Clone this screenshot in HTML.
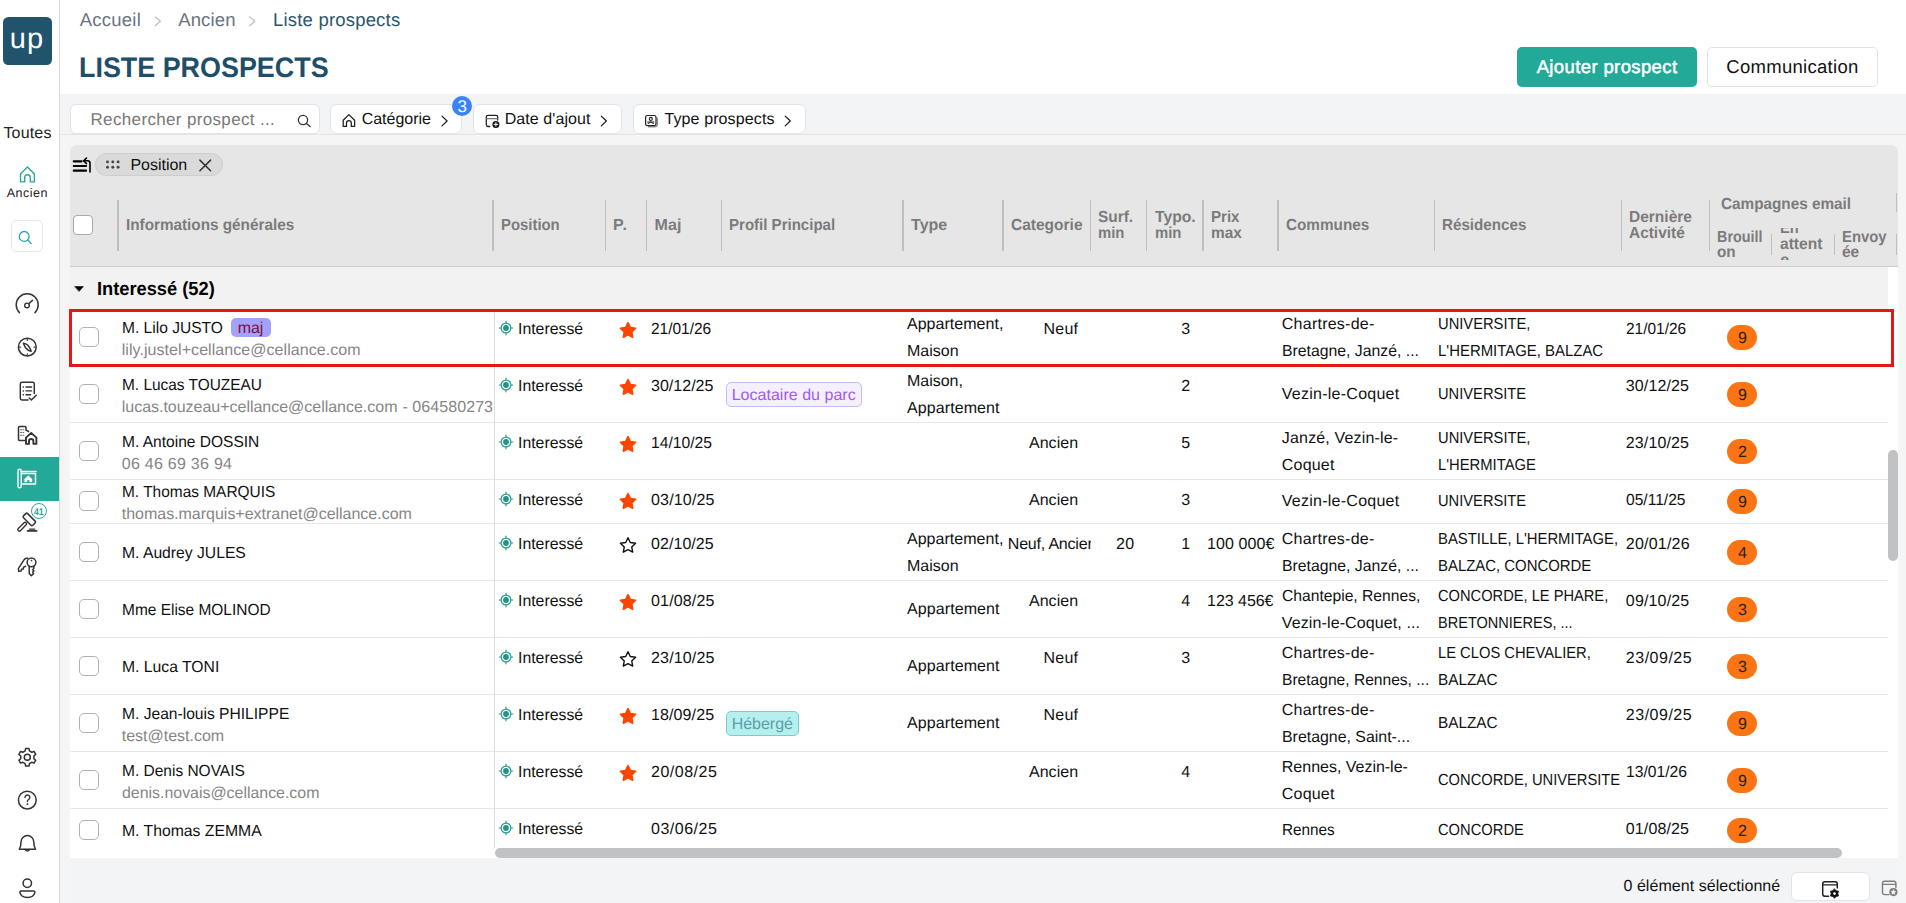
<!DOCTYPE html>
<html lang="fr"><head><meta charset="utf-8"><title>Liste prospects</title>
<style>
*{box-sizing:border-box;margin:0;padding:0}
html,body{width:1906px;height:903px;overflow:hidden}
body{position:relative;background:#f5f5f5;font-family:"Liberation Sans",sans-serif;color:#111}
.b{position:absolute}
.t{position:absolute;white-space:pre;line-height:20px;height:20px;text-rendering:geometricPrecision}
svg{position:absolute;overflow:visible}
.ck{position:absolute;width:20px;height:20px;border:1.7px solid #b0b1b8;border-radius:5px;background:#fff}
.pill{position:absolute;width:30px;height:25px;border-radius:13px;background:#fc7414}
.sep{position:absolute;background:#bfbfbf}

</style></head>
<body>
<div class="b" style="left:0px;top:0px;width:59px;height:903px;background:#fff;"></div>
<div class="b" style="left:59px;top:0px;width:1px;height:903px;background:#dadada;"></div>
<div class="b" style="left:2.8px;top:16.8px;width:48.9px;height:48.5px;background:#21536c;border-radius:5.5px;"></div>
<div class="b" style="left:11px;top:220px;width:32px;height:32px;background:#fff;border:1px solid #e5e7eb;border-radius:5px;"></div>
<div class="b" style="left:0px;top:457px;width:59px;height:44px;background:#22a998;"></div>
<div class="b" style="left:60px;top:0px;width:1846px;height:94px;background:#fff;"></div>
<div class="b" style="left:1517px;top:47px;width:180px;height:40px;background:#22a998;border-radius:5px;"></div>
<div class="b" style="left:1707px;top:47px;width:171px;height:40px;background:#fff;border:1px solid #e2e2e2;border-radius:5px;"></div>
<div class="b" style="left:60px;top:94px;width:1846px;height:40px;background:#f3f4f6;"></div>
<div class="b" style="left:70px;top:858px;width:1828px;height:45px;background:#f3f4f6;"></div>
<div class="b" style="left:60px;top:134px;width:1846px;height:1px;background:#e2e4e8;"></div>
<div class="b" style="left:70px;top:104px;width:250px;height:30px;background:#fff;border:1px solid #e1e3e8;border-radius:6px;"></div>
<div class="b" style="left:330.4px;top:104px;width:132px;height:30px;background:#fff;border:1px solid #e1e3e8;border-radius:6px;"></div>
<div class="b" style="left:473.4px;top:104px;width:149px;height:30px;background:#fff;border:1px solid #e1e3e8;border-radius:6px;"></div>
<div class="b" style="left:633.4px;top:104px;width:173px;height:30px;background:#fff;border:1px solid #e1e3e8;border-radius:6px;"></div>
<div class="b" style="left:452px;top:96px;width:20px;height:20px;background:#3b82f6;border-radius:10px;"></div>
<div class="b" style="left:70px;top:145px;width:1828px;height:122px;background:#e6e6e6;border-radius:7px 7px 0 0;"></div>
<div class="b" style="left:70px;top:266px;width:1828px;height:1px;background:#cbcbcb;"></div>
<div class="b" style="left:70px;top:267px;width:1828px;height:591px;background:#fff;"></div>
<div class="b" style="left:70px;top:267px;width:1818px;height:42px;background:#f2f2f2;"></div>
<div class="b" style="left:95px;top:153px;width:128px;height:23px;background:#dadada;border:1px solid #cdcdcd;border-radius:12px;"></div>
<div class="ck" style="left:72.5px;top:215px;border-color:#a9a9a9;border-radius:4px"></div>
<div class="sep" style="left:117.2px;top:200px;width:2px;height:51px"></div>
<div class="sep" style="left:492.2px;top:200px;width:2px;height:51px"></div>
<div class="sep" style="left:604.9px;top:200px;width:1px;height:51px"></div>
<div class="sep" style="left:646.0px;top:200px;width:1px;height:51px"></div>
<div class="sep" style="left:721.1px;top:200px;width:1px;height:51px"></div>
<div class="sep" style="left:902.2px;top:200px;width:2px;height:51px"></div>
<div class="sep" style="left:1002.3px;top:200px;width:2px;height:51px"></div>
<div class="sep" style="left:1090.2px;top:200px;width:1px;height:51px"></div>
<div class="sep" style="left:1146.2px;top:200px;width:1px;height:51px"></div>
<div class="sep" style="left:1202.3px;top:200px;width:2px;height:51px"></div>
<div class="sep" style="left:1277.2px;top:200px;width:2px;height:51px"></div>
<div class="sep" style="left:1434.0px;top:200px;width:1px;height:51px"></div>
<div class="sep" style="left:1621.0px;top:200px;width:1px;height:51px"></div>
<div class="sep" style="left:1708.8px;top:200px;width:1px;height:51px"></div>
<div class="sep" style="left:1771.0px;top:234px;width:1px;height:21px"></div>
<div class="sep" style="left:1833.8px;top:234px;width:1px;height:21px"></div>
<div class="sep" style="left:1896.3px;top:234px;width:1px;height:21px"></div>
<div class="sep" style="left:1896.3px;top:193px;width:1px;height:19px"></div>
<div class="b" style="left:70px;top:365px;width:1818px;height:1px;background:#e7e7e7;"></div>
<div class="ck" style="left:79px;top:327.0px"></div>
<div class="pill" style="left:1727px;top:325px"></div>
<div class="b" style="left:70px;top:422px;width:1818px;height:1px;background:#e7e7e7;"></div>
<div class="ck" style="left:79px;top:384.0px"></div>
<div class="pill" style="left:1727px;top:382px"></div>
<div class="b" style="left:70px;top:479px;width:1818px;height:1px;background:#e7e7e7;"></div>
<div class="ck" style="left:79px;top:441.0px"></div>
<div class="pill" style="left:1727px;top:439px"></div>
<div class="b" style="left:70px;top:523px;width:1818px;height:1px;background:#e7e7e7;"></div>
<div class="ck" style="left:79px;top:491.0px"></div>
<div class="pill" style="left:1727px;top:489px"></div>
<div class="b" style="left:70px;top:580px;width:1818px;height:1px;background:#e7e7e7;"></div>
<div class="ck" style="left:79px;top:542.0px"></div>
<div class="pill" style="left:1727px;top:540px"></div>
<div class="b" style="left:70px;top:637px;width:1818px;height:1px;background:#e7e7e7;"></div>
<div class="ck" style="left:79px;top:599.0px"></div>
<div class="pill" style="left:1727px;top:597px"></div>
<div class="b" style="left:70px;top:694px;width:1818px;height:1px;background:#e7e7e7;"></div>
<div class="ck" style="left:79px;top:656.0px"></div>
<div class="pill" style="left:1727px;top:654px"></div>
<div class="b" style="left:70px;top:751px;width:1818px;height:1px;background:#e7e7e7;"></div>
<div class="ck" style="left:79px;top:713.0px"></div>
<div class="pill" style="left:1727px;top:711px"></div>
<div class="b" style="left:70px;top:808px;width:1818px;height:1px;background:#e7e7e7;"></div>
<div class="ck" style="left:79px;top:770.0px"></div>
<div class="pill" style="left:1727px;top:768px"></div>
<div class="ck" style="left:79px;top:820.0px"></div>
<div class="pill" style="left:1727px;top:818px"></div>
<div class="b" style="left:231px;top:318px;width:40px;height:19px;background:#a5a0fb;border-radius:5px;"></div>
<div class="b" style="left:726px;top:382px;width:136px;height:25px;background:#f4f0ff;border:1px solid #c9b8fb;border-radius:5px;"></div>
<div class="b" style="left:726px;top:711px;width:73px;height:25px;background:#b5f0ef;border:1px solid #74cfd2;border-radius:5px;"></div>
<div class="b" style="left:494px;top:309px;width:1px;height:539px;background:#dedede;"></div>
<div class="b" style="left:495px;top:848px;width:1347px;height:10px;background:#c1c2c4;border-radius:5px;"></div>
<div class="b" style="left:1888px;top:450px;width:10px;height:111px;background:#c1c2c4;border-radius:5px;"></div>
<div class="b" style="left:1791px;top:871.5px;width:78.5px;height:29px;background:#fff;border:1px solid #e1e3e8;border-radius:6px;"></div>
<div class="b" style="left:31.1px;top:503.4px;width:16px;height:16px;background:#fff;border:1.2px solid #2aa79b;border-radius:50%;"></div>
<span class="t" id="s0" style="top:29px;font-size:29px;color:#fff;letter-spacing:0.982px;left:9.79px;">up</span>
<span class="t" id="s1" style="top:124px;font-size:16px;color:#222;letter-spacing:0.163px;left:3.44px;">Toutes</span>
<span class="t" id="s2" style="top:183px;font-size:12.5px;color:#222;letter-spacing:0.473px;left:6.76px;">Ancien</span>
<span class="t" id="s3" style="top:10px;font-size:18.5px;color:#6b7280;letter-spacing:0.236px;left:79.75px;">Accueil</span>
<span class="t" id="s4" style="top:10px;font-size:18.5px;color:#6b7280;letter-spacing:0.153px;left:178.15px;">Ancien</span>
<span class="t" id="s5" style="top:10px;font-size:18.5px;color:#2b566e;letter-spacing:0.191px;left:273.05px;">Liste prospects</span>
<span class="t" id="s6" style="top:57px;font-size:28.2px;font-weight:700;color:#1f4e68;left:79.41px;transform:scaleX(0.9542);transform-origin:0 50%;">LISTE PROSPECTS</span>
<span class="t" id="s7" style="top:57px;font-size:18.5px;color:#fff;letter-spacing:0.380px;left:1536.65px;-webkit-text-stroke:0.5px #fff;">Ajouter prospect</span>
<span class="t" id="s8" style="top:57px;font-size:18.5px;letter-spacing:0.290px;left:1726.25px;">Communication</span>
<span class="t" id="s9" style="top:110px;font-size:17px;color:#787878;letter-spacing:0.347px;left:90.50px;">Rechercher prospect ...</span>
<span class="t" id="s10" style="top:110px;font-size:16px;letter-spacing:-0.006px;left:361.64px;">Catégorie</span>
<span class="t" id="s11" style="top:110px;font-size:16px;letter-spacing:0.086px;left:504.64px;">Date d&#x27;ajout</span>
<span class="t" id="s12" style="top:110px;font-size:16px;letter-spacing:0.116px;left:664.44px;">Type prospects</span>
<span class="t" id="s13" style="top:97px;font-size:17px;color:#fff;left:457.50px;">3</span>
<span class="t" id="s14" style="top:156px;font-size:16px;letter-spacing:-0.013px;left:130.44px;">Position</span>
<span class="t" id="s15" style="top:216px;font-size:16px;font-weight:700;color:#7b7b7b;left:125.74px;transform:scaleX(0.9550);transform-origin:0 50%;">Informations générales</span>
<span class="t" id="s16" style="top:216px;font-size:16px;font-weight:700;color:#7b7b7b;left:500.84px;transform:scaleX(0.9304);transform-origin:0 50%;">Position</span>
<span class="t" id="s17" style="top:216px;font-size:16px;font-weight:700;color:#7b7b7b;letter-spacing:0.879px;left:613.04px;">P.</span>
<span class="t" id="s18" style="top:216px;font-size:16px;font-weight:700;color:#7b7b7b;letter-spacing:0.149px;left:654.44px;">Maj</span>
<span class="t" id="s19" style="top:216px;font-size:16px;font-weight:700;color:#7b7b7b;left:729.44px;transform:scaleX(0.9398);transform-origin:0 50%;">Profil Principal</span>
<span class="t" id="s20" style="top:216px;font-size:16px;font-weight:700;color:#7b7b7b;letter-spacing:0.016px;left:911.04px;">Type</span>
<span class="t" id="s21" style="top:216px;font-size:16px;font-weight:700;color:#7b7b7b;left:1011.04px;transform:scaleX(0.9691);transform-origin:0 50%;">Categorie</span>
<span class="t" id="s22" style="top:208px;font-size:16px;font-weight:700;color:#7b7b7b;left:1098.44px;transform:scaleX(0.9634);transform-origin:0 50%;">Surf.</span>
<span class="t" id="s23" style="top:224px;font-size:16px;font-weight:700;color:#7b7b7b;left:1098.44px;transform:scaleX(0.9285);transform-origin:0 50%;">min</span>
<span class="t" id="s24" style="top:208px;font-size:16px;font-weight:700;color:#7b7b7b;left:1154.84px;transform:scaleX(0.9816);transform-origin:0 50%;">Typo.</span>
<span class="t" id="s25" style="top:224px;font-size:16px;font-weight:700;color:#7b7b7b;left:1154.84px;transform:scaleX(0.9285);transform-origin:0 50%;">min</span>
<span class="t" id="s26" style="top:208px;font-size:16px;font-weight:700;color:#7b7b7b;left:1211.04px;transform:scaleX(0.9428);transform-origin:0 50%;">Prix</span>
<span class="t" id="s27" style="top:224px;font-size:16px;font-weight:700;color:#7b7b7b;left:1211.04px;transform:scaleX(0.9622);transform-origin:0 50%;">max</span>
<span class="t" id="s28" style="top:216px;font-size:16px;font-weight:700;color:#7b7b7b;left:1285.74px;transform:scaleX(0.9552);transform-origin:0 50%;">Communes</span>
<span class="t" id="s29" style="top:216px;font-size:16px;font-weight:700;color:#7b7b7b;left:1442.14px;transform:scaleX(0.9481);transform-origin:0 50%;">Résidences</span>
<span class="t" id="s30" style="top:208px;font-size:16px;font-weight:700;color:#7b7b7b;left:1629.44px;transform:scaleX(0.9692);transform-origin:0 50%;">Dernière</span>
<span class="t" id="s31" style="top:224px;font-size:16px;font-weight:700;color:#7b7b7b;left:1629.44px;transform:scaleX(0.9641);transform-origin:0 50%;">Activité</span>
<span class="t" id="s32" style="top:195px;font-size:16px;font-weight:700;color:#7b7b7b;left:1720.94px;transform:scaleX(0.9563);transform-origin:0 50%;">Campagnes email</span>
<span class="t" id="s33" style="top:228px;font-size:16px;font-weight:700;color:#7b7b7b;left:1717.24px;transform:scaleX(0.8983);transform-origin:0 50%;">Brouill</span>
<span class="t" id="s34" style="top:243px;font-size:16px;font-weight:700;color:#7b7b7b;left:1717.24px;transform:scaleX(0.9526);transform-origin:0 50%;">on</span>
<span class="t" id="s35" style="top:235px;font-size:16px;font-weight:700;color:#7b7b7b;left:1779.74px;transform:scaleX(0.9715);transform-origin:0 50%;">attent</span>
<span class="t" id="s36" style="top:228px;font-size:16px;font-weight:700;color:#7b7b7b;left:1841.94px;transform:scaleX(0.9293);transform-origin:0 50%;">Envoy</span>
<span class="t" id="s37" style="top:243px;font-size:16px;font-weight:700;color:#7b7b7b;left:1841.94px;transform:scaleX(0.9676);transform-origin:0 50%;">ée</span>
<span class="t" id="s38" style="top:219px;font-size:16px;font-weight:700;color:#7b7b7b;left:1779.74px;transform:scaleX(0.9104);transform-origin:0 50%;clip-path:inset(9px 0 0px 0);">En</span>
<span class="t" id="s39" style="top:251px;font-size:16px;font-weight:700;color:#7b7b7b;left:1780.30px;clip-path:inset(0px 0 11px 0);">e</span>
<span class="t" id="s40" style="top:280px;font-size:19px;font-weight:700;color:#000;left:96.93px;transform:scaleX(0.9609);transform-origin:0 50%;">Interessé (52)</span>
<span class="t" id="s41" style="top:319px;font-size:16px;left:121.74px;transform:scaleX(0.9729);transform-origin:0 50%;">M. Lilo JUSTO</span>
<span class="t" id="s42" style="top:341px;font-size:16px;color:#868686;letter-spacing:0.060px;left:121.74px;">lily.justel+cellance@cellance.com</span>
<span class="t" id="s43" style="top:320px;font-size:16px;left:517.74px;transform:scaleX(0.9895);transform-origin:0 50%;">Interessé</span>
<span class="t" id="s44" style="top:320px;font-size:16px;left:651.04px;transform:scaleX(0.9653);transform-origin:0 50%;">21/01/26</span>
<span class="t" id="s45" style="top:315px;font-size:16px;letter-spacing:0.038px;left:906.94px;">Appartement,</span>
<span class="t" id="s46" style="top:342px;font-size:16px;letter-spacing:0.007px;left:906.94px;">Maison</span>
<span class="t" id="s47" style="top:320px;font-size:16px;letter-spacing:0.231px;right:827.71px;">Neuf</span>
<span class="t" id="s48" style="top:320px;font-size:16px;right:715.80px;">3</span>
<span class="t" id="s49" style="top:315px;font-size:16px;letter-spacing:0.242px;left:1281.84px;">Chartres-de-</span>
<span class="t" id="s50" style="top:342px;font-size:16px;left:1281.84px;transform:scaleX(0.9868);transform-origin:0 50%;">Bretagne, Janzé, ...</span>
<span class="t" id="s51" style="top:315px;font-size:16px;left:1438.24px;transform:scaleX(0.9199);transform-origin:0 50%;">UNIVERSITE,</span>
<span class="t" id="s52" style="top:342px;font-size:16px;left:1438.24px;transform:scaleX(0.9328);transform-origin:0 50%;">L&#x27;HERMITAGE, BALZAC</span>
<span class="t" id="s53" style="top:320px;font-size:16px;left:1625.84px;transform:scaleX(0.9653);transform-origin:0 50%;">21/01/26</span>
<span class="t" id="s54" style="top:329px;font-size:16px;color:#1f1f1f;left:1737.90px;">9</span>
<span class="t" id="s55" style="top:376px;font-size:16px;left:121.74px;transform:scaleX(0.9641);transform-origin:0 50%;">M. Lucas TOUZEAU</span>
<span class="t" id="s56" style="top:398px;font-size:16px;color:#868686;letter-spacing:-0.020px;left:121.74px;">lucas.touzeau+cellance@cellance.com</span>
<span class="t" id="s57" style="top:398px;font-size:16px;color:#868686;letter-spacing:0.071px;left:402.44px;width:91.70px;overflow:hidden;">- 0645802731</span>
<span class="t" id="s58" style="top:377px;font-size:16px;left:517.74px;transform:scaleX(0.9895);transform-origin:0 50%;">Interessé</span>
<span class="t" id="s59" style="top:377px;font-size:16px;letter-spacing:0.017px;left:651.04px;">30/12/25</span>
<span class="t" id="s60" style="top:372px;font-size:16px;letter-spacing:-0.016px;left:906.94px;">Maison,</span>
<span class="t" id="s61" style="top:399px;font-size:16px;letter-spacing:0.101px;left:906.94px;">Appartement</span>
<span class="t" id="s62" style="top:377px;font-size:16px;right:715.80px;">2</span>
<span class="t" id="s63" style="top:385px;font-size:16px;letter-spacing:0.252px;left:1281.84px;">Vezin-le-Coquet</span>
<span class="t" id="s64" style="top:385px;font-size:16px;left:1438.24px;transform:scaleX(0.9178);transform-origin:0 50%;">UNIVERSITE</span>
<span class="t" id="s65" style="top:377px;font-size:16px;letter-spacing:0.117px;left:1625.84px;">30/12/25</span>
<span class="t" id="s66" style="top:386px;font-size:16px;color:#1f1f1f;left:1737.90px;">9</span>
<span class="t" id="s67" style="top:433px;font-size:16px;left:121.74px;transform:scaleX(0.9712);transform-origin:0 50%;">M. Antoine DOSSIN</span>
<span class="t" id="s68" style="top:455px;font-size:16px;color:#868686;letter-spacing:0.268px;left:121.74px;">06 46 69 36 94</span>
<span class="t" id="s69" style="top:434px;font-size:16px;left:517.74px;transform:scaleX(0.9895);transform-origin:0 50%;">Interessé</span>
<span class="t" id="s70" style="top:434px;font-size:16px;left:651.04px;transform:scaleX(0.9781);transform-origin:0 50%;">14/10/25</span>
<span class="t" id="s71" style="top:434px;font-size:16px;letter-spacing:0.033px;right:827.91px;">Ancien</span>
<span class="t" id="s72" style="top:434px;font-size:16px;right:715.80px;">5</span>
<span class="t" id="s73" style="top:429px;font-size:16px;letter-spacing:0.167px;left:1281.84px;">Janzé, Vezin-le-</span>
<span class="t" id="s74" style="top:456px;font-size:16px;letter-spacing:0.188px;left:1281.84px;">Coquet</span>
<span class="t" id="s75" style="top:429px;font-size:16px;left:1438.24px;transform:scaleX(0.9199);transform-origin:0 50%;">UNIVERSITE,</span>
<span class="t" id="s76" style="top:456px;font-size:16px;left:1438.24px;transform:scaleX(0.9247);transform-origin:0 50%;">L&#x27;HERMITAGE</span>
<span class="t" id="s77" style="top:434px;font-size:16px;letter-spacing:0.117px;left:1625.84px;">23/10/25</span>
<span class="t" id="s78" style="top:443px;font-size:16px;color:#1f1f1f;left:1737.90px;">2</span>
<span class="t" id="s79" style="top:483px;font-size:16px;left:121.74px;transform:scaleX(0.9652);transform-origin:0 50%;">M. Thomas MARQUIS</span>
<span class="t" id="s80" style="top:505px;font-size:16px;color:#868686;letter-spacing:-0.013px;left:121.74px;">thomas.marquis+extranet@cellance.com</span>
<span class="t" id="s81" style="top:491px;font-size:16px;left:517.74px;transform:scaleX(0.9895);transform-origin:0 50%;">Interessé</span>
<span class="t" id="s82" style="top:491px;font-size:16px;letter-spacing:0.167px;left:651.04px;">03/10/25</span>
<span class="t" id="s83" style="top:491px;font-size:16px;letter-spacing:0.033px;right:827.91px;">Ancien</span>
<span class="t" id="s84" style="top:491px;font-size:16px;right:715.80px;">3</span>
<span class="t" id="s85" style="top:492px;font-size:16px;letter-spacing:0.252px;left:1281.84px;">Vezin-le-Coquet</span>
<span class="t" id="s86" style="top:492px;font-size:16px;left:1438.24px;transform:scaleX(0.9178);transform-origin:0 50%;">UNIVERSITE</span>
<span class="t" id="s87" style="top:491px;font-size:16px;left:1625.84px;transform:scaleX(0.9742);transform-origin:0 50%;">05/11/25</span>
<span class="t" id="s88" style="top:493px;font-size:16px;color:#1f1f1f;left:1737.90px;">9</span>
<span class="t" id="s89" style="top:544px;font-size:16px;left:121.74px;transform:scaleX(0.9805);transform-origin:0 50%;">M. Audrey JULES</span>
<span class="t" id="s90" style="top:535px;font-size:16px;left:517.74px;transform:scaleX(0.9895);transform-origin:0 50%;">Interessé</span>
<span class="t" id="s91" style="top:535px;font-size:16px;letter-spacing:0.055px;left:651.04px;">02/10/25</span>
<span class="t" id="s92" style="top:530px;font-size:16px;letter-spacing:0.038px;left:906.94px;">Appartement,</span>
<span class="t" id="s93" style="top:557px;font-size:16px;letter-spacing:0.007px;left:906.94px;">Maison</span>
<span class="t" id="s94" style="top:535px;font-size:16px;letter-spacing:-0.200px;left:1007.80px;width:83.20px;overflow:hidden;">Neuf, Ancien</span>
<span class="t" id="s95" style="top:535px;font-size:16px;letter-spacing:0.412px;right:771.43px;">20</span>
<span class="t" id="s96" style="top:535px;font-size:16px;right:715.80px;">1</span>
<span class="t" id="s97" style="top:535px;font-size:16px;letter-spacing:0.098px;left:1207.04px;">100 000€</span>
<span class="t" id="s98" style="top:530px;font-size:16px;letter-spacing:0.242px;left:1281.84px;">Chartres-de-</span>
<span class="t" id="s99" style="top:557px;font-size:16px;left:1281.84px;transform:scaleX(0.9868);transform-origin:0 50%;">Bretagne, Janzé, ...</span>
<span class="t" id="s100" style="top:530px;font-size:16px;left:1438.24px;transform:scaleX(0.9288);transform-origin:0 50%;">BASTILLE, L&#x27;HERMITAGE,</span>
<span class="t" id="s101" style="top:557px;font-size:16px;left:1438.24px;transform:scaleX(0.9322);transform-origin:0 50%;">BALZAC, CONCORDE</span>
<span class="t" id="s102" style="top:535px;font-size:16px;letter-spacing:0.205px;left:1625.84px;">20/01/26</span>
<span class="t" id="s103" style="top:544px;font-size:16px;color:#1f1f1f;left:1737.90px;">4</span>
<span class="t" id="s104" style="top:601px;font-size:16px;left:121.74px;transform:scaleX(0.9663);transform-origin:0 50%;">Mme Elise MOLINOD</span>
<span class="t" id="s105" style="top:592px;font-size:16px;left:517.74px;transform:scaleX(0.9895);transform-origin:0 50%;">Interessé</span>
<span class="t" id="s106" style="top:592px;font-size:16px;letter-spacing:0.155px;left:651.04px;">01/08/25</span>
<span class="t" id="s107" style="top:600px;font-size:16px;letter-spacing:0.101px;left:906.94px;">Appartement</span>
<span class="t" id="s108" style="top:592px;font-size:16px;letter-spacing:0.033px;right:827.91px;">Ancien</span>
<span class="t" id="s109" style="top:592px;font-size:16px;right:715.80px;">4</span>
<span class="t" id="s110" style="top:592px;font-size:16px;letter-spacing:-0.039px;left:1207.04px;">123 456€</span>
<span class="t" id="s111" style="top:587px;font-size:16px;left:1281.84px;transform:scaleX(0.9780);transform-origin:0 50%;">Chantepie, Rennes,</span>
<span class="t" id="s112" style="top:614px;font-size:16px;letter-spacing:0.112px;left:1281.84px;">Vezin-le-Coquet, ...</span>
<span class="t" id="s113" style="top:587px;font-size:16px;left:1438.24px;transform:scaleX(0.9161);transform-origin:0 50%;">CONCORDE, LE PHARE,</span>
<span class="t" id="s114" style="top:614px;font-size:16px;left:1438.24px;transform:scaleX(0.9084);transform-origin:0 50%;">BRETONNIERES, ...</span>
<span class="t" id="s115" style="top:592px;font-size:16px;letter-spacing:0.155px;left:1625.84px;">09/10/25</span>
<span class="t" id="s116" style="top:601px;font-size:16px;color:#1f1f1f;left:1737.90px;">3</span>
<span class="t" id="s117" style="top:658px;font-size:16px;left:121.74px;transform:scaleX(0.9830);transform-origin:0 50%;">M. Luca TONI</span>
<span class="t" id="s118" style="top:649px;font-size:16px;left:517.74px;transform:scaleX(0.9895);transform-origin:0 50%;">Interessé</span>
<span class="t" id="s119" style="top:649px;font-size:16px;letter-spacing:0.155px;left:651.04px;">23/10/25</span>
<span class="t" id="s120" style="top:657px;font-size:16px;letter-spacing:0.101px;left:906.94px;">Appartement</span>
<span class="t" id="s121" style="top:649px;font-size:16px;letter-spacing:0.231px;right:827.71px;">Neuf</span>
<span class="t" id="s122" style="top:649px;font-size:16px;right:715.80px;">3</span>
<span class="t" id="s123" style="top:644px;font-size:16px;letter-spacing:0.242px;left:1281.84px;">Chartres-de-</span>
<span class="t" id="s124" style="top:671px;font-size:16px;left:1281.84px;transform:scaleX(0.9737);transform-origin:0 50%;">Bretagne, Rennes, ...</span>
<span class="t" id="s125" style="top:644px;font-size:16px;left:1438.24px;transform:scaleX(0.9207);transform-origin:0 50%;">LE CLOS CHEVALIER,</span>
<span class="t" id="s126" style="top:671px;font-size:16px;left:1438.24px;transform:scaleX(0.9561);transform-origin:0 50%;">BALZAC</span>
<span class="t" id="s127" style="top:649px;font-size:16px;letter-spacing:0.505px;left:1625.84px;">23/09/25</span>
<span class="t" id="s128" style="top:658px;font-size:16px;color:#1f1f1f;left:1737.90px;">3</span>
<span class="t" id="s129" style="top:705px;font-size:16px;left:121.74px;transform:scaleX(0.9749);transform-origin:0 50%;">M. Jean-louis PHILIPPE</span>
<span class="t" id="s130" style="top:727px;font-size:16px;color:#868686;letter-spacing:-0.006px;left:121.74px;">test@test.com</span>
<span class="t" id="s131" style="top:706px;font-size:16px;left:517.74px;transform:scaleX(0.9895);transform-origin:0 50%;">Interessé</span>
<span class="t" id="s132" style="top:706px;font-size:16px;letter-spacing:0.105px;left:651.04px;">18/09/25</span>
<span class="t" id="s133" style="top:714px;font-size:16px;letter-spacing:0.101px;left:906.94px;">Appartement</span>
<span class="t" id="s134" style="top:706px;font-size:16px;letter-spacing:0.231px;right:827.71px;">Neuf</span>
<span class="t" id="s135" style="top:701px;font-size:16px;letter-spacing:0.242px;left:1281.84px;">Chartres-de-</span>
<span class="t" id="s136" style="top:728px;font-size:16px;left:1281.84px;transform:scaleX(0.9934);transform-origin:0 50%;">Bretagne, Saint-...</span>
<span class="t" id="s137" style="top:714px;font-size:16px;left:1438.24px;transform:scaleX(0.9561);transform-origin:0 50%;">BALZAC</span>
<span class="t" id="s138" style="top:706px;font-size:16px;letter-spacing:0.505px;left:1625.84px;">23/09/25</span>
<span class="t" id="s139" style="top:715px;font-size:16px;color:#1f1f1f;left:1737.90px;">9</span>
<span class="t" id="s140" style="top:762px;font-size:16px;left:121.74px;transform:scaleX(0.9683);transform-origin:0 50%;">M. Denis NOVAIS</span>
<span class="t" id="s141" style="top:784px;font-size:16px;color:#868686;left:121.74px;transform:scaleX(0.9942);transform-origin:0 50%;">denis.novais@cellance.com</span>
<span class="t" id="s142" style="top:763px;font-size:16px;left:517.74px;transform:scaleX(0.9895);transform-origin:0 50%;">Interessé</span>
<span class="t" id="s143" style="top:763px;font-size:16px;letter-spacing:0.505px;left:651.04px;">20/08/25</span>
<span class="t" id="s144" style="top:763px;font-size:16px;letter-spacing:0.033px;right:827.91px;">Ancien</span>
<span class="t" id="s145" style="top:763px;font-size:16px;right:715.80px;">4</span>
<span class="t" id="s146" style="top:758px;font-size:16px;letter-spacing:-0.016px;left:1281.84px;">Rennes, Vezin-le-</span>
<span class="t" id="s147" style="top:785px;font-size:16px;letter-spacing:0.188px;left:1281.84px;">Coquet</span>
<span class="t" id="s148" style="top:771px;font-size:16px;left:1438.24px;transform:scaleX(0.9186);transform-origin:0 50%;">CONCORDE, UNIVERSITE</span>
<span class="t" id="s149" style="top:763px;font-size:16px;left:1625.84px;transform:scaleX(0.9781);transform-origin:0 50%;">13/01/26</span>
<span class="t" id="s150" style="top:772px;font-size:16px;color:#1f1f1f;left:1737.90px;">9</span>
<span class="t" id="s151" style="top:822px;font-size:16px;left:121.74px;transform:scaleX(0.9843);transform-origin:0 50%;">M. Thomas ZEMMA</span>
<span class="t" id="s152" style="top:820px;font-size:16px;left:517.74px;transform:scaleX(0.9895);transform-origin:0 50%;">Interessé</span>
<span class="t" id="s153" style="top:820px;font-size:16px;letter-spacing:0.505px;left:651.04px;">03/06/25</span>
<span class="t" id="s154" style="top:821px;font-size:16px;left:1281.84px;transform:scaleX(0.9558);transform-origin:0 50%;">Rennes</span>
<span class="t" id="s155" style="top:821px;font-size:16px;left:1438.24px;transform:scaleX(0.9194);transform-origin:0 50%;">CONCORDE</span>
<span class="t" id="s156" style="top:820px;font-size:16px;letter-spacing:0.105px;left:1625.84px;">01/08/25</span>
<span class="t" id="s157" style="top:822px;font-size:16px;color:#1f1f1f;left:1737.90px;">2</span>
<span class="t" id="s158" style="top:319px;font-size:16px;color:#7a1238;letter-spacing:-0.020px;left:237.64px;">maj</span>
<span class="t" id="s159" style="top:386px;font-size:16px;color:#a259f2;letter-spacing:0.028px;left:731.64px;">Locataire du parc</span>
<span class="t" id="s160" style="top:715px;font-size:16px;color:#5b9fa8;letter-spacing:-0.036px;left:731.74px;">Hébergé</span>
<span class="t" id="s161" style="top:877px;font-size:16px;letter-spacing:0.055px;left:1623.44px;">0 élément sélectionné</span>
<span class="t" id="s162" style="top:503px;font-size:9.7px;font-weight:700;color:#2aa79b;left:34.26px;transform:scaleX(0.8978);transform-origin:0 50%;">41</span>
<svg style="left:497.7px;top:319.8px" width="16" height="16" viewBox="-8 -8 16 16"><g stroke="#2a9d8f" stroke-width="1.2" fill="none" stroke-linecap="round"><circle r="4.9"/><path d="M0-6.8V-5M0 6.8V5M-6.8 0H-5M6.8 0H5"/></g><circle r="2.9" fill="#1f9488"/></svg>
<svg style="left:617.9px;top:320.0px" width="20" height="20" viewBox="-10 -10 20 20"><path d="M0.00 -7.30 L2.35 -2.54 L7.61 -1.77 L3.80 1.94 L4.70 7.17 L0.00 4.70 L-4.70 7.17 L-3.80 1.94 L-7.61 -1.77 L-2.35 -2.54Z" fill="#ff4500" stroke="#ff4500" stroke-width="1.6" stroke-linejoin="round"/></svg>
<svg style="left:497.7px;top:376.8px" width="16" height="16" viewBox="-8 -8 16 16"><g stroke="#2a9d8f" stroke-width="1.2" fill="none" stroke-linecap="round"><circle r="4.9"/><path d="M0-6.8V-5M0 6.8V5M-6.8 0H-5M6.8 0H5"/></g><circle r="2.9" fill="#1f9488"/></svg>
<svg style="left:617.9px;top:377.0px" width="20" height="20" viewBox="-10 -10 20 20"><path d="M0.00 -7.30 L2.35 -2.54 L7.61 -1.77 L3.80 1.94 L4.70 7.17 L0.00 4.70 L-4.70 7.17 L-3.80 1.94 L-7.61 -1.77 L-2.35 -2.54Z" fill="#ff4500" stroke="#ff4500" stroke-width="1.6" stroke-linejoin="round"/></svg>
<svg style="left:497.7px;top:433.8px" width="16" height="16" viewBox="-8 -8 16 16"><g stroke="#2a9d8f" stroke-width="1.2" fill="none" stroke-linecap="round"><circle r="4.9"/><path d="M0-6.8V-5M0 6.8V5M-6.8 0H-5M6.8 0H5"/></g><circle r="2.9" fill="#1f9488"/></svg>
<svg style="left:617.9px;top:434.0px" width="20" height="20" viewBox="-10 -10 20 20"><path d="M0.00 -7.30 L2.35 -2.54 L7.61 -1.77 L3.80 1.94 L4.70 7.17 L0.00 4.70 L-4.70 7.17 L-3.80 1.94 L-7.61 -1.77 L-2.35 -2.54Z" fill="#ff4500" stroke="#ff4500" stroke-width="1.6" stroke-linejoin="round"/></svg>
<svg style="left:497.7px;top:490.8px" width="16" height="16" viewBox="-8 -8 16 16"><g stroke="#2a9d8f" stroke-width="1.2" fill="none" stroke-linecap="round"><circle r="4.9"/><path d="M0-6.8V-5M0 6.8V5M-6.8 0H-5M6.8 0H5"/></g><circle r="2.9" fill="#1f9488"/></svg>
<svg style="left:617.9px;top:491.0px" width="20" height="20" viewBox="-10 -10 20 20"><path d="M0.00 -7.30 L2.35 -2.54 L7.61 -1.77 L3.80 1.94 L4.70 7.17 L0.00 4.70 L-4.70 7.17 L-3.80 1.94 L-7.61 -1.77 L-2.35 -2.54Z" fill="#ff4500" stroke="#ff4500" stroke-width="1.6" stroke-linejoin="round"/></svg>
<svg style="left:497.7px;top:534.8px" width="16" height="16" viewBox="-8 -8 16 16"><g stroke="#2a9d8f" stroke-width="1.2" fill="none" stroke-linecap="round"><circle r="4.9"/><path d="M0-6.8V-5M0 6.8V5M-6.8 0H-5M6.8 0H5"/></g><circle r="2.9" fill="#1f9488"/></svg>
<svg style="left:617.9px;top:535.0px" width="20" height="20" viewBox="-10 -10 20 20"><path d="M0.00 -7.30 L2.29 -2.46 L7.61 -1.77 L3.71 1.91 L4.70 7.17 L0.00 4.60 L-4.70 7.17 L-3.71 1.91 L-7.61 -1.77 L-2.29 -2.46Z" fill="none" stroke="#111" stroke-width="1.4" stroke-linejoin="round"/></svg>
<svg style="left:497.7px;top:591.8px" width="16" height="16" viewBox="-8 -8 16 16"><g stroke="#2a9d8f" stroke-width="1.2" fill="none" stroke-linecap="round"><circle r="4.9"/><path d="M0-6.8V-5M0 6.8V5M-6.8 0H-5M6.8 0H5"/></g><circle r="2.9" fill="#1f9488"/></svg>
<svg style="left:617.9px;top:592.0px" width="20" height="20" viewBox="-10 -10 20 20"><path d="M0.00 -7.30 L2.35 -2.54 L7.61 -1.77 L3.80 1.94 L4.70 7.17 L0.00 4.70 L-4.70 7.17 L-3.80 1.94 L-7.61 -1.77 L-2.35 -2.54Z" fill="#ff4500" stroke="#ff4500" stroke-width="1.6" stroke-linejoin="round"/></svg>
<svg style="left:497.7px;top:648.8px" width="16" height="16" viewBox="-8 -8 16 16"><g stroke="#2a9d8f" stroke-width="1.2" fill="none" stroke-linecap="round"><circle r="4.9"/><path d="M0-6.8V-5M0 6.8V5M-6.8 0H-5M6.8 0H5"/></g><circle r="2.9" fill="#1f9488"/></svg>
<svg style="left:617.9px;top:649.0px" width="20" height="20" viewBox="-10 -10 20 20"><path d="M0.00 -7.30 L2.29 -2.46 L7.61 -1.77 L3.71 1.91 L4.70 7.17 L0.00 4.60 L-4.70 7.17 L-3.71 1.91 L-7.61 -1.77 L-2.29 -2.46Z" fill="none" stroke="#111" stroke-width="1.4" stroke-linejoin="round"/></svg>
<svg style="left:497.7px;top:705.8px" width="16" height="16" viewBox="-8 -8 16 16"><g stroke="#2a9d8f" stroke-width="1.2" fill="none" stroke-linecap="round"><circle r="4.9"/><path d="M0-6.8V-5M0 6.8V5M-6.8 0H-5M6.8 0H5"/></g><circle r="2.9" fill="#1f9488"/></svg>
<svg style="left:617.9px;top:706.0px" width="20" height="20" viewBox="-10 -10 20 20"><path d="M0.00 -7.30 L2.35 -2.54 L7.61 -1.77 L3.80 1.94 L4.70 7.17 L0.00 4.70 L-4.70 7.17 L-3.80 1.94 L-7.61 -1.77 L-2.35 -2.54Z" fill="#ff4500" stroke="#ff4500" stroke-width="1.6" stroke-linejoin="round"/></svg>
<svg style="left:497.7px;top:762.8px" width="16" height="16" viewBox="-8 -8 16 16"><g stroke="#2a9d8f" stroke-width="1.2" fill="none" stroke-linecap="round"><circle r="4.9"/><path d="M0-6.8V-5M0 6.8V5M-6.8 0H-5M6.8 0H5"/></g><circle r="2.9" fill="#1f9488"/></svg>
<svg style="left:617.9px;top:763.0px" width="20" height="20" viewBox="-10 -10 20 20"><path d="M0.00 -7.30 L2.35 -2.54 L7.61 -1.77 L3.80 1.94 L4.70 7.17 L0.00 4.70 L-4.70 7.17 L-3.80 1.94 L-7.61 -1.77 L-2.35 -2.54Z" fill="#ff4500" stroke="#ff4500" stroke-width="1.6" stroke-linejoin="round"/></svg>
<svg style="left:497.7px;top:819.8px" width="16" height="16" viewBox="-8 -8 16 16"><g stroke="#2a9d8f" stroke-width="1.2" fill="none" stroke-linecap="round"><circle r="4.9"/><path d="M0-6.8V-5M0 6.8V5M-6.8 0H-5M6.8 0H5"/></g><circle r="2.9" fill="#1f9488"/></svg>
<div class="b" style="left:69px;top:309px;width:1825px;height:58px;border:3px solid #e41616"></div>
<svg style="left:0;top:0" width="1906" height="903" viewBox="0 0 1906 903"><path d="M155.2 16.9 L160.39999999999998 21.3 L155.2 25.7" stroke="#b9bcc2" stroke-width="1.2" fill="none" stroke-linecap="round" stroke-linejoin="round" /><path d="M249.6 16.9 L254.79999999999998 21.3 L249.6 25.7" stroke="#b9bcc2" stroke-width="1.2" fill="none" stroke-linecap="round" stroke-linejoin="round" /><circle cx="303" cy="120" r="4.6" stroke="#333" stroke-width="1.3" fill="none"/><path d="M306.4 123.4 L310.1 126.6" stroke="#333" stroke-width="1.3" fill="none" stroke-linecap="round" stroke-linejoin="round" /><path d="M343.2 120.2 L348.9 114.6 L354.6 120.2 V126.4 H351.3 V123 a2.4 2.4 0 0 0 -4.8 0 V126.4 H343.2 Z" stroke="#222" stroke-width="1.3" fill="none" stroke-linecap="round" stroke-linejoin="round" /><path d="M442 116.1 L447.1 121 L442 125.9" stroke="#222" stroke-width="1.3" fill="none" stroke-linecap="round" stroke-linejoin="round" /><path d="M601.3 116.1 L606.4 121 L601.3 125.9" stroke="#222" stroke-width="1.3" fill="none" stroke-linecap="round" stroke-linejoin="round" /><path d="M785.2 116.1 L790.3000000000001 121 L785.2 125.9" stroke="#222" stroke-width="1.3" fill="none" stroke-linecap="round" stroke-linejoin="round" /><path d="M489.8 126.5 H488 a1.7 1.7 0 0 1 -1.7 -1.7 V117 a1.7 1.7 0 0 1 1.7 -1.7 H496 a1.7 1.7 0 0 1 1.7 1.7 V120" stroke="#222" stroke-width="1.3" fill="none" stroke-linecap="round" stroke-linejoin="round" /><path d="M486.6 118.6 H497.4" stroke="#777" stroke-width="1.1" fill="none" stroke-linecap="round" stroke-linejoin="round" /><circle cx="495.9" cy="124.4" r="3.5" stroke="none" stroke-width="0" fill="#111"/><path d="M494 124.4 H497.8 M495.9 122.5 V126.3" stroke="#fff" stroke-width="1.0" fill="none" stroke-linecap="round" stroke-linejoin="round" /><path d="M647.4 115.5 H654.2 a1.8 1.8 0 0 1 1.8 1.8 V123.8 a1.8 1.8 0 0 1 -1.8 1.8 H647.4 a1.8 1.8 0 0 1 -1.8 -1.8 V117.3 a1.8 1.8 0 0 1 1.8 -1.8 Z" stroke="#222" stroke-width="1.2" fill="none" stroke-linecap="round" stroke-linejoin="round" /><circle cx="650.8" cy="118.9" r="1.5" stroke="#222" stroke-width="1.1" fill="none"/><path d="M648 123.4 q2.8 -2.6 5.6 0 M647.6 122 H654" stroke="#222" stroke-width="1.0" fill="none" stroke-linecap="round" stroke-linejoin="round" /><path d="M657.2 118 V125 a1.8 1.8 0 0 1 -1.8 1.8 H648.4" stroke="#555" stroke-width="1.0" fill="none" stroke-linecap="round" stroke-linejoin="round" /><path d="M73.8 161.3 H81.6 M73.8 166 H86 M73.8 170.7 H86" stroke="#000" stroke-width="2.2" fill="none" stroke-linecap="round" stroke-linejoin="round" stroke-linecap="butt"/><path d="M90 172 V163.2 a2.4 2.4 0 0 0 -2.4 -2.4 H84 M86.5 158 L83.6 160.8 L86.5 163.6" stroke="#000" stroke-width="1.6" fill="none" stroke-linecap="round" stroke-linejoin="round" /><circle cx="107.5" cy="161.9" r="1.45" stroke="none" stroke-width="0" fill="#444"/><circle cx="107.5" cy="167.2" r="1.45" stroke="none" stroke-width="0" fill="#444"/><circle cx="112.8" cy="161.9" r="1.45" stroke="none" stroke-width="0" fill="#444"/><circle cx="112.8" cy="167.2" r="1.45" stroke="none" stroke-width="0" fill="#444"/><circle cx="118.1" cy="161.9" r="1.45" stroke="none" stroke-width="0" fill="#444"/><circle cx="118.1" cy="167.2" r="1.45" stroke="none" stroke-width="0" fill="#444"/><path d="M199.9 160.1 L210.6 170.7 M210.6 160.1 L199.9 170.7" stroke="#333" stroke-width="1.5" fill="none" stroke-linecap="round" stroke-linejoin="round" /><path d="M75 286.6 H83.4 L79.2 291.2 Z" stroke="#000" stroke-width="0.6" fill="#000" stroke-linecap="round" stroke-linejoin="round" /><path d="M20.5 174 L27.4 167.1 L34.4 174 V181.9 H30.3 V177.6 a2.8 2.8 0 0 0 -5.6 0 V181.9 H20.5 Z" stroke="#2aa79b" stroke-width="1.4" fill="none" stroke-linecap="round" stroke-linejoin="round" /><circle cx="24.2" cy="236.4" r="4.9" stroke="#2aa7ae" stroke-width="1.3" fill="none"/><path d="M27.8 240 L31.2 243.6" stroke="#2aa7ae" stroke-width="1.3" fill="none" stroke-linecap="round" stroke-linejoin="round" /><path d="M19.4 312.6 A11 11 0 1 1 35 312.6" stroke="#333" stroke-width="1.5" fill="none" stroke-linecap="round" stroke-linejoin="round" /><circle cx="27" cy="305.4" r="2.3" stroke="#333" stroke-width="1.4" fill="none"/><path d="M28.7 303.8 L32.5 300.4" stroke="#333" stroke-width="1.5" fill="none" stroke-linecap="round" stroke-linejoin="round" /><circle cx="27.3" cy="347.1" r="8.9" stroke="#333" stroke-width="1.5" fill="none"/><path d="M27.3 339.4 V340.4 M27.3 353.8 V354.8 M19.6 347.1 H20.6 M34 347.1 H35" stroke="#333" stroke-width="1.2" fill="none" stroke-linecap="round" stroke-linejoin="round" /><path d="M23.4 343.2 Q28.6 343.6 31.3 351.2 Q25.6 350.4 23.4 343.2 Z" stroke="#333" stroke-width="1.4" fill="none" stroke-linecap="round" stroke-linejoin="round" /><path d="M28 399.9 H22 a1.7 1.7 0 0 1 -1.7 -1.7 V384 a1.7 1.7 0 0 1 1.7 -1.7 H32.6 a1.7 1.7 0 0 1 1.7 1.7 V393.6" stroke="#333" stroke-width="1.5" fill="none" stroke-linecap="round" stroke-linejoin="round" /><path d="M26 387 H31.6 M26 390.9 H31.6 M26 394.7 H30.6" stroke="#333" stroke-width="1.4" fill="none" stroke-linecap="round" stroke-linejoin="round" /><path d="M23.2 387 h.2 M23.2 390.9 h.2 M23.2 394.7 h.2" stroke="#333" stroke-width="1.5" fill="none" stroke-linecap="round" stroke-linejoin="round" /><path d="M29.2 398 L31.4 400 L36.2 395.3" stroke="#333" stroke-width="1.5" fill="none" stroke-linecap="round" stroke-linejoin="round" /><path d="M24.6 440.4 H19.6 a1.1 1.1 0 0 1 -1.1 -1.1 V427.5 a1.1 1.1 0 0 1 1.1 -1.1 H24.9 a1.1 1.1 0 0 1 1.1 1.1 V430.2 L28.6 431.5" stroke="#333" stroke-width="1.5" fill="none" stroke-linecap="round" stroke-linejoin="round" /><path d="M20.6 429.7 h.9 M22.9 429.7 h.9 M20.6 432.5 h.9 M22.9 432.5 h.9 M20.6 435.2 h.9 M22.9 435.2 h.9" stroke="#666" stroke-width="1.1" fill="none" stroke-linecap="round" stroke-linejoin="round" /><path d="M26 437.6 L31.2 432.9 L36.4 437.6 V443.9 H33.4 V441.2 a2.2 2.2 0 0 0 -4.4 0 V443.9 H26 Z" stroke="#333" stroke-width="1.9" fill="none" stroke-linecap="round" stroke-linejoin="round" /><path d="M18 470.9 a1.6 1.6 0 0 1 3.2 0 V486.3 a1.6 1.6 0 0 1 -3.2 0 Z" stroke="#fff" stroke-width="1.4" fill="none" stroke-linecap="round" stroke-linejoin="round" /><path d="M21.2 471.6 H36.2" stroke="#fff" stroke-width="1.5" fill="none" stroke-linecap="round" stroke-linejoin="round" /><path d="M21.9 473.6 H35.5 V484 H21.9" stroke="#fff" stroke-width="1.5" fill="none" stroke-linecap="round" stroke-linejoin="round" /><path d="M24.6 478.9 L28.3 475.8 L32 478.9 V481.9 H29.6 V480 H27 V481.9 H24.6 Z" stroke="#fff" stroke-width="0.4" fill="#fff" stroke-linecap="round" stroke-linejoin="round" /><g transform="translate(29.3 519.4) rotate(45)"><rect x="-6.6" y="-2.9" width="13.2" height="5.8" rx="1.3" stroke="#333" stroke-width="1.5" fill="none"/></g><g transform="translate(23 525.9) rotate(-45)"><rect x="-6.6" y="-1.5" width="11" height="3" rx="1.4" stroke="#333" stroke-width="1.4" fill="#fff"/></g><path d="M27.6 530.9 H36.6" stroke="#333" stroke-width="1.9" fill="none" stroke-linecap="round" stroke-linejoin="round" /><path d="M29.4 529.1 H34.8" stroke="#333" stroke-width="1.3" fill="none" stroke-linecap="round" stroke-linejoin="round" /><circle cx="31.5" cy="562.3" r="4.4" stroke="#333" stroke-width="1.5" fill="none"/><path d="M29.2 566.2 V573.6 L31.3 575.8 L33.6 573.6 L32.6 572.3 L33.9 571 L32.8 569.7 L33.8 568.4 V566.2" stroke="#333" stroke-width="1.5" fill="none" stroke-linecap="round" stroke-linejoin="round" /><path d="M31.4 560.6 h.2" stroke="#333" stroke-width="1.6" fill="none" stroke-linecap="round" stroke-linejoin="round" /><path d="M27.6 558.3 Q25.2 557.6 23.8 560.2 L18.4 568.6 L18.7 571.3 L21.2 570.9 L21.5 569.3 L23.2 569 L23.5 567.3 L25.6 566.3" stroke="#333" stroke-width="1.5" fill="none" stroke-linecap="round" stroke-linejoin="round" /><path d="M25.16 750.95 L25.63 748.56 L28.97 748.56 L29.44 750.95 L31.73 752.27 L34.04 751.48 L35.70 754.37 L33.87 755.98 L33.87 758.62 L35.70 760.23 L34.04 763.12 L31.73 762.33 L29.44 763.65 L28.97 766.04 L25.63 766.04 L25.16 763.65 L22.87 762.33 L20.56 763.12 L18.90 760.23 L20.73 758.62 L20.73 755.98 L18.90 754.37 L20.56 751.48 L22.87 752.27Z" stroke="#333" stroke-width="1.5" fill="none" stroke-linecap="round" stroke-linejoin="round" /><circle cx="27.3" cy="757.3" r="3.0" stroke="#333" stroke-width="1.5" fill="none"/><circle cx="27.3" cy="800.1" r="8.9" stroke="#333" stroke-width="1.5" fill="none"/><path d="M25 797.4 a2.4 2.4 0 1 1 3.6 2.1 q-1.2 .7 -1.2 2" stroke="#333" stroke-width="1.4" fill="none" stroke-linecap="round" stroke-linejoin="round" /><path d="M27.4 804.2 h.1" stroke="#333" stroke-width="1.7" fill="none" stroke-linecap="round" stroke-linejoin="round" /><path d="M19.3 849.2 Q21 846.6 21 842 a6.4 6.4 0 0 1 12.8 0 Q33.8 846.6 35.5 849.2 Z" stroke="#333" stroke-width="1.5" fill="none" stroke-linecap="round" stroke-linejoin="round" /><path d="M25.2 849.4 a2.3 2.3 0 0 0 4.4 0" stroke="#333" stroke-width="1.5" fill="none" stroke-linecap="round" stroke-linejoin="round" /><circle cx="27.3" cy="883.3" r="4.2" stroke="#333" stroke-width="1.5" fill="none"/><path d="M21.2 891.1 H33.6 a1.3 1.3 0 0 1 1.3 1.5 Q33.6 897.4 27.4 897.4 Q21.2 897.4 19.9 892.6 a1.3 1.3 0 0 1 1.3 -1.5 Z" stroke="#333" stroke-width="1.5" fill="none" stroke-linecap="round" stroke-linejoin="round" /><path d="M1828.6 896.3 H1825 a2.3 2.3 0 0 1 -2.3 -2.3 V884 a2.3 2.3 0 0 1 2.3 -2.3 H1835 a2.3 2.3 0 0 1 2.3 2.3 V888" stroke="#222" stroke-width="1.5" fill="none" stroke-linecap="round" stroke-linejoin="round" /><path d="M1822.9 884.9 H1837.1" stroke="#222" stroke-width="1.3" fill="none" stroke-linecap="round" stroke-linejoin="round" /><path d="M1834.50 888.90 L1836.15 890.74 L1838.57 891.25 L1837.80 893.60 L1838.57 895.95 L1836.15 896.46 L1834.50 898.30 L1832.85 896.46 L1830.43 895.95 L1831.20 893.60 L1830.43 891.25 L1832.85 890.74Z" stroke="#111" stroke-width="0.8" fill="#111" stroke-linecap="round" stroke-linejoin="round" /><circle cx="1834.5" cy="893.6" r="1.3" stroke="none" stroke-width="0" fill="#fff"/><path d="M1889 894.6 H1884.6 a2.1 2.1 0 0 1 -2.1 -2.1 V883.4 a2.1 2.1 0 0 1 2.1 -2.1 H1893.8 a2.1 2.1 0 0 1 2.1 2.1 V887.6" stroke="#7d7d7d" stroke-width="1.4" fill="none" stroke-linecap="round" stroke-linejoin="round" /><path d="M1882.7 884.4 H1895.7" stroke="#7d7d7d" stroke-width="1.2" fill="none" stroke-linecap="round" stroke-linejoin="round" /><circle cx="1893.4" cy="892.1" r="4.1" stroke="none" stroke-width="0" fill="#7d7d7d"/><path d="M1893.40 889.50 L1894.11 891.23 L1895.97 891.37 L1894.54 892.57 L1894.99 894.38 L1893.40 893.40 L1891.81 894.38 L1892.26 892.57 L1890.83 891.37 L1892.69 891.23Z" stroke="#fff" stroke-width="0.3" fill="#fff" stroke-linecap="round" stroke-linejoin="round" /></svg>
</body></html>
